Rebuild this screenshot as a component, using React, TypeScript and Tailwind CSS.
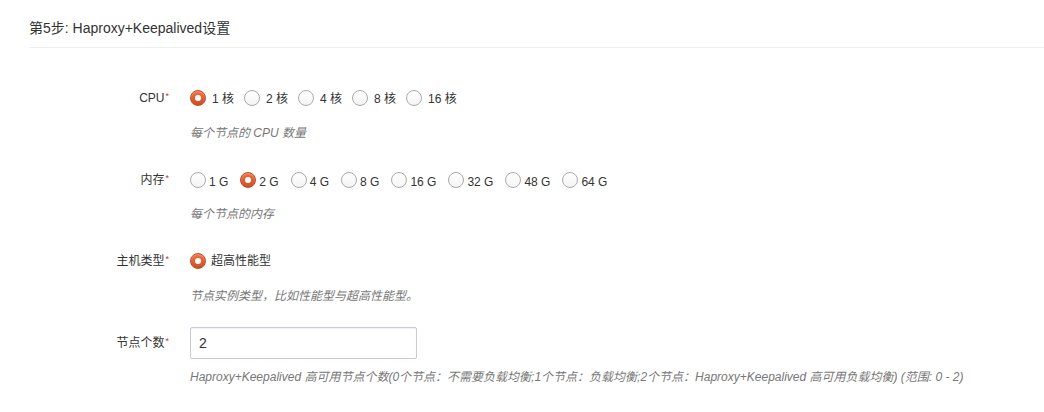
import React from "react";

const font = { fontFamily: '"Liberation Sans", Arial, "Noto Sans CJK SC", sans-serif' };

function Radio({ checked }: { checked?: boolean }) {
  if (checked) {
    return (
      <span className="w-4 h-4 rounded-full shrink-0 flex items-center justify-center border border-[#c2491f] bg-gradient-to-b from-[#ee7347] to-[#cf4e22] shadow-[inset_0_1px_1px_rgba(255,255,255,0.3)]">
        <span className="w-[6px] h-[6px] rounded-full bg-white" />
      </span>
    );
  }
  return <span className="w-4 h-4 rounded-full shrink-0 border border-[#aaaaaa] bg-gradient-to-b from-white to-[#f4f4f4]" />;
}

function Label({ text }: { text: string }) {
  return (
    <div className="text-right text-[12px] text-[#333] pr-[1px] leading-6">
      {text}
      <span className="text-[#c9302c] text-[9px] align-top relative top-[-2px] ml-[1px]">*</span>
    </div>
  );
}

function Hint({ children }: { children: React.ReactNode }) {
  return <div className="col-start-2 text-[12px] italic text-[#777] leading-4">{children}</div>;
}

export default function App() {
  const cpus = ["1 核", "2 核", "4 核", "8 核", "16 核"];
  const mems = ["1 G", "2 G", "4 G", "8 G", "16 G", "32 G", "48 G", "64 G"];

  return (
    <div className="w-[1044px] h-[412px] bg-white overflow-hidden" style={font}>
      <div className="pl-[29px]">
        <div className="pt-[18px] pb-[9px] border-b border-[#eeeeee] text-[14px] leading-5 text-[#333]">
          第5步: Haproxy+Keepalived设置
        </div>
      </div>

      <div className="grid grid-cols-[170px_1fr] gap-x-5 mt-[38px]">
        <Label text="CPU" />
        <div className="flex items-center h-6">
          {cpus.map((c, i) => (
            <div key={c} className="flex items-center mr-[10px]">
              <Radio checked={i === 0} />
              <span className="ml-[6px] text-[12px] text-[#333] leading-4 mt-[2px]">{c}</span>
            </div>
          ))}
        </div>
        <div className="h-[15px] col-span-2" />
        <Hint>每个节点的 CPU 数量</Hint>
        <div className="h-[27px] col-span-2" />

        <Label text="内存" />
        <div className="flex items-center h-6">
          {mems.map((m, i) => (
            <div key={m} className="flex items-center mr-[12px]">
              <Radio checked={i === 1} />
              <span className="ml-[3px] text-[12px] text-[#333] leading-4 mt-[4px]">{m}</span>
            </div>
          ))}
        </div>
        <div className="h-[14px] col-span-2" />
        <Hint>每个节点的内存</Hint>
        <div className="h-[27px] col-span-2" />

        <Label text="主机类型" />
        <div className="flex items-center h-6">
          <Radio checked />
          <span className="ml-[5px] text-[12px] text-[#333] leading-4">超高性能型</span>
        </div>
        <div className="h-[15px] col-span-2" />
        <Hint>节点实例类型，比如性能型与超高性能型。</Hint>
        <div className="h-[23px] col-span-2" />

        <div className="flex items-center justify-end h-8">
          <Label text="节点个数" />
        </div>
        <div>
          <input
            defaultValue="2"
            className="w-[227px] h-8 border border-[#c9c9d9] rounded-[2px] px-2 text-[14px] text-[#333] outline-none shadow-[inset_0_1px_1px_rgba(0,0,0,0.06)]"
            style={font}
          />
        </div>
        <div className="h-[10px] col-span-2" />
        <Hint>
          Haproxy+Keepalived 高可用节点个数(0个节点：不需要负载均衡;1个节点：负载均衡;2个节点：Haproxy+Keepalived 高可用负载均衡) (范围: 0 - 2)
        </Hint>
      </div>
    </div>
  );
}
